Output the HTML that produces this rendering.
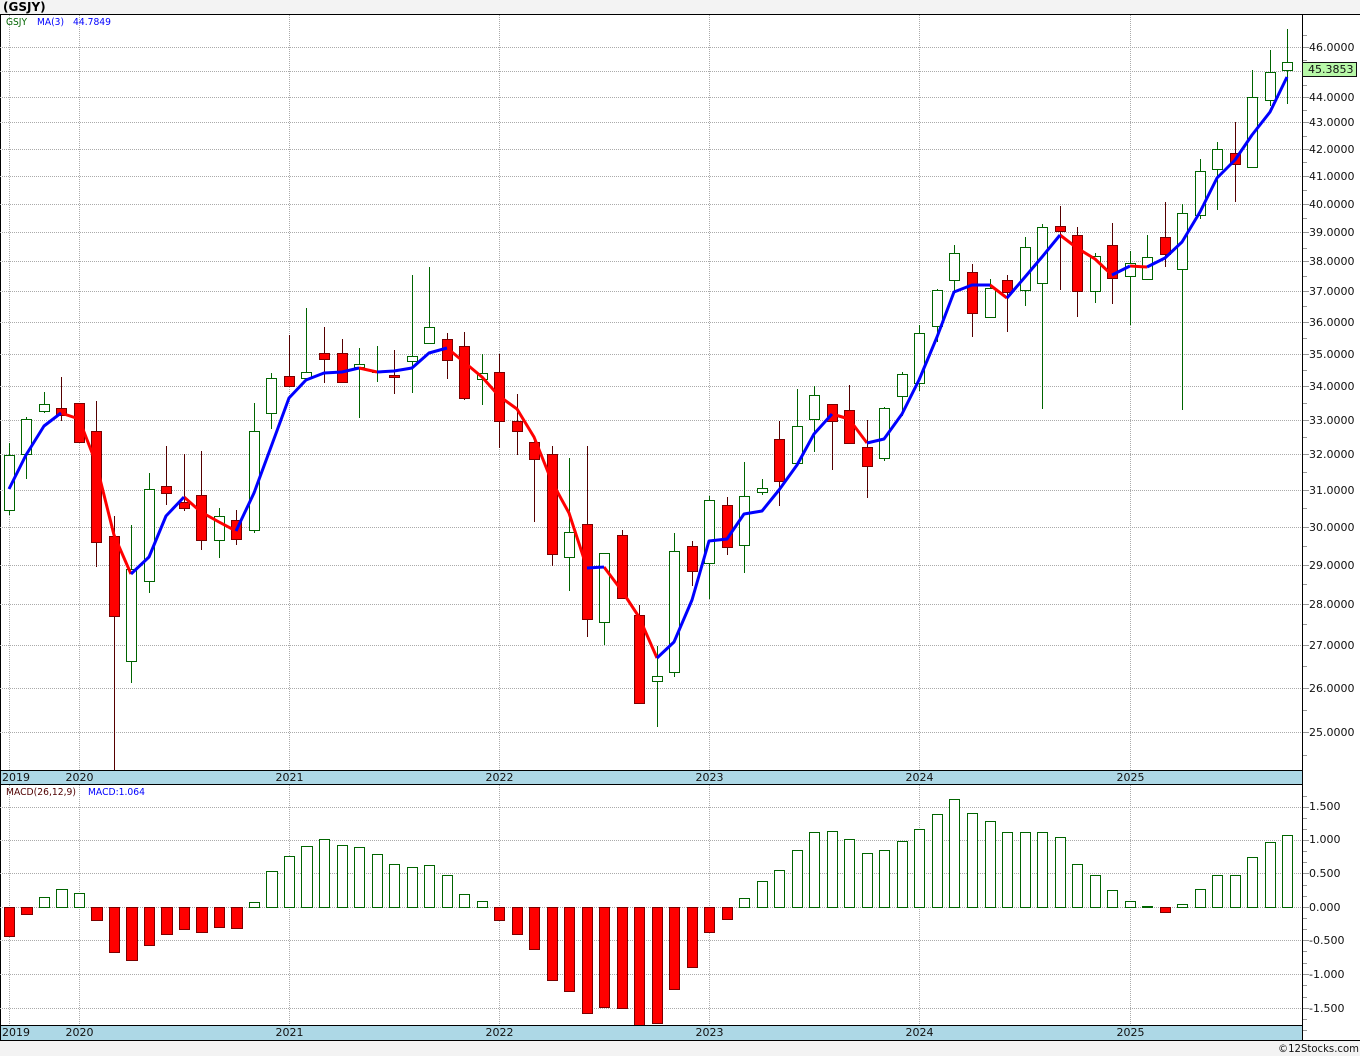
<!DOCTYPE html>
<html lang="en">
<head>
<meta charset="utf-8">
<title>(GSJY)</title>
<style>
html,body{margin:0;padding:0;background:#f3f3f3;width:1360px;height:1056px;overflow:hidden}
svg{display:block;position:absolute;left:0;top:0}
text{font-family:"DejaVu Sans","Liberation Sans",sans-serif;font-size:11px;fill:#111}
</style>
</head>
<body>
<svg width="1360" height="1056" viewBox="0 0 1360 1056" xmlns="http://www.w3.org/2000/svg">
<rect x="0" y="0" width="1360" height="1056" fill="#f3f3f3"/>
<rect x="0" y="14" width="1360" height="1026" fill="#fff"/>
<rect x="0" y="770" width="1302" height="14" fill="#add8e6"/>
<rect x="0" y="1025" width="1302" height="15" fill="#add8e6"/>
<path fill="none" stroke="#000" stroke-width="1" d="M0.5 14V1040"/>

<!-- grid -->
<g fill="none" stroke="#aaa" stroke-width="1" stroke-dasharray="1 1">
<path d="M0 47.5H1302M0 71.5H1302M0 97.5H1302M0 122.5H1302M0 149.5H1302M0 176.5H1302M0 204.5H1302M0 232.5H1302M0 261.5H1302M0 291.5H1302M0 322.5H1302M0 354.5H1302M0 386.5H1302M0 420.5H1302M0 454.5H1302M0 490.5H1302M0 527.5H1302M0 565.5H1302M0 604.5H1302M0 645.5H1302M0 688.5H1302M0 732.5H1302"/>
<path d="M0 807.5H1302M0 840.5H1302M0 873.5H1302M0 907.5H1302M0 940.5H1302M0 974.5H1302M0 1008.5H1302"/>
<path d="M9.5 15V770M79.5 15V770M289.5 15V770M499.5 15V770M709.5 15V770M919.5 15V770M1130.5 15V770"/>
<path d="M9.5 785V1025M79.5 785V1025M289.5 785V1025M499.5 785V1025M709.5 785V1025M919.5 785V1025M1130.5 785V1025"/>
</g>

<!-- wicks -->
<path fill="none" stroke="#006400" stroke-width="1" d="M9.5 443V515M26.5 417V479M44.5 392V413M131.5 525V683M149.5 473V593M219.5 508V558M254.5 403V533M271.5 373V429M306.5 308V381M359.5 348V418M377.5 346V382M412.5 275V393M429.5 267V344M482.5 354V405M569.5 458V591M604.5 553V645M657.5 646V727M674.5 533V677M709.5 496V599M744.5 462V573M762.5 479V495M797.5 389V464M814.5 386V452M884.5 407V461M902.5 372V416M919.5 325V391M937.5 289V342M954.5 245V293M990.5 279V318M1025.5 237V306M1042.5 224V409M1095.5 253V303M1130.5 251V325M1147.5 235V280M1182.5 204V410M1200.5 159V219M1217.5 142V210M1252.5 70V168M1270.5 50V106M1287.5 29V104"/>
<path fill="none" stroke="#550000" stroke-width="1" d="M61.5 377V421M79.5 403V443M96.5 401V567M114.5 516V770M166.5 446V505M184.5 454V511M201.5 451V550M236.5 510V545M289.5 335V387M324.5 327V383M342.5 339V383M394.5 350V394M447.5 333V379M464.5 332V400M499.5 354V448M517.5 394V455M534.5 437V522M552.5 446V566M587.5 446V637M622.5 530V599M639.5 605V704M692.5 541V586M727.5 497V555M779.5 421V506M832.5 404V470M849.5 385V444M867.5 420V498M972.5 264V337M1007.5 275V332M1060.5 206V290M1077.5 227V317M1112.5 223V304M1165.5 202V267M1235.5 122V202"/>

<!-- up bodies -->
<path fill="#fff" stroke="#006400" stroke-width="1" d="M4.5 455.5h10v55h-10zM21.5 419.5h10v35h-10zM39.5 404.5h10v7h-10zM126.5 569.5h10v92h-10zM144.5 489.5h10v92h-10zM214.5 516.5h10v24h-10zM249.5 431.5h10v99h-10zM266.5 378.5h10v35h-10zM301.5 372.5h10v6h-10zM354.5 364.5h10v3h-10zM372.5 371.5h10v1h-10zM407.5 356.5h10v5h-10zM424.5 327.5h10v16h-10zM477.5 373.5h10v6h-10zM564.5 532.5h10v25h-10zM599.5 553.5h10v69h-10zM652.5 676.5h10v5h-10zM669.5 551.5h10v121h-10zM704.5 500.5h10v63h-10zM739.5 496.5h10v49h-10zM757.5 488.5h10v4h-10zM792.5 426.5h10v37h-10zM809.5 395.5h10v24h-10zM879.5 408.5h10v50h-10zM897.5 374.5h10v22h-10zM914.5 333.5h10v50h-10zM932.5 290.5h10v36h-10zM949.5 253.5h10v27h-10zM985.5 288.5h10v29h-10zM1020.5 247.5h10v43h-10zM1037.5 227.5h10v56h-10zM1090.5 256.5h10v35h-10zM1125.5 263.5h10v13h-10zM1142.5 257.5h10v22h-10zM1177.5 213.5h10v56h-10zM1195.5 171.5h10v44h-10zM1212.5 149.5h10v20h-10zM1247.5 97.5h10v70h-10zM1265.5 72.5h10v28h-10zM1282.5 62.5h10v8h-10z"/>
<!-- down bodies -->
<path fill="#ff0000" stroke="#7a0000" stroke-width="1" d="M56.5 408.5h10v7h-10zM74.5 403.5h10v39h-10zM91.5 431.5h10v111h-10zM109.5 536.5h10v80h-10zM161.5 486.5h10v7h-10zM179.5 502.5h10v6h-10zM196.5 495.5h10v45h-10zM231.5 520.5h10v19h-10zM284.5 376.5h10v10h-10zM319.5 353.5h10v6h-10zM337.5 353.5h10v29h-10zM389.5 375.5h10v2h-10zM442.5 339.5h10v21h-10zM459.5 346.5h10v52h-10zM494.5 372.5h10v49h-10zM512.5 421.5h10v10h-10zM529.5 442.5h10v17h-10zM547.5 454.5h10v100h-10zM582.5 524.5h10v95h-10zM617.5 535.5h10v63h-10zM634.5 615.5h10v88h-10zM687.5 546.5h10v25h-10zM722.5 505.5h10v42h-10zM774.5 439.5h10v42h-10zM827.5 404.5h10v17h-10zM844.5 410.5h10v33h-10zM862.5 447.5h10v19h-10zM967.5 272.5h10v41h-10zM1002.5 280.5h10v12h-10zM1055.5 226.5h10v5h-10zM1072.5 235.5h10v56h-10zM1107.5 245.5h10v33h-10zM1160.5 237.5h10v17h-10zM1230.5 153.5h10v11h-10z"/>

<!-- MA(3) -->
<g fill="none" stroke-width="3" stroke-linejoin="round">
<path stroke="#ff0000" d="M61 413L79 419L96 463L114 535L131 574M184 497L201 512L219 522L236 531M359 368L377 372M447 348L464 362L482 377L499 396L517 409L534 437L552 482L569 513L587 568M604 567L622 591L639 617L657 658M832 414L849 419L867 443M990 285L1007 298M1060 235L1077 248L1095 259L1112 275M1130 266L1147 267"/>
<path stroke="#0000ff" d="M9 489L26 455L44 426L61 413M131 574L149 557L166 516L184 497M236 531L254 493L271 447L289 398L306 380L324 373L342 372L359 368M377 372L394 371L412 368L429 353L447 348M587 568L604 567M657 658L674 642L692 600L709 541L727 539L744 514L762 511L779 490L797 465L814 434L832 414M867 443L884 439L902 414L919 380L937 337L954 292L972 285L990 285M1007 298L1025 277L1042 257L1060 235M1112 275L1130 266M1147 267L1165 258L1182 242L1200 212L1217 178L1235 160L1252 135L1270 112L1287 77"/>
</g>

<!-- MACD bars -->
<path fill="#fff" stroke="#006400" stroke-width="1" d="M39.5 897.5h10V907.5h-10zM56.5 889.5h11V907.5h-11zM74.5 893.5h10V907.5h-10zM249.5 902.5h10V907.5h-10zM266.5 871.5h11V907.5h-11zM284.5 856.5h10V907.5h-10zM301.5 846.5h11V907.5h-11zM319.5 839.5h10V907.5h-10zM337.5 845.5h10V907.5h-10zM354.5 847.5h10V907.5h-10zM372.5 854.5h10V907.5h-10zM389.5 864.5h10V907.5h-10zM407.5 867.5h10V907.5h-10zM424.5 865.5h10V907.5h-10zM442.5 875.5h10V907.5h-10zM459.5 894.5h10V907.5h-10zM477.5 901.5h10V907.5h-10zM739.5 898.5h10V907.5h-10zM757.5 881.5h10V907.5h-10zM774.5 870.5h10V907.5h-10zM792.5 850.5h10V907.5h-10zM809.5 832.5h10V907.5h-10zM827.5 831.5h10V907.5h-10zM844.5 839.5h10V907.5h-10zM862.5 853.5h10V907.5h-10zM879.5 850.5h10V907.5h-10zM897.5 841.5h10V907.5h-10zM914.5 829.5h10V907.5h-10zM932.5 814.5h10V907.5h-10zM949.5 799.5h10V907.5h-10zM967.5 813.5h10V907.5h-10zM985.5 821.5h10V907.5h-10zM1002.5 832.5h10V907.5h-10zM1020.5 832.5h10V907.5h-10zM1037.5 832.5h10V907.5h-10zM1055.5 837.5h10V907.5h-10zM1072.5 864.5h10V907.5h-10zM1090.5 875.5h10V907.5h-10zM1107.5 890.5h10V907.5h-10zM1125.5 901.5h10V907.5h-10zM1142.5 906.5h10V907.5h-10zM1177.5 904.5h10V907.5h-10zM1195.5 889.5h10V907.5h-10zM1212.5 875.5h10V907.5h-10zM1230.5 875.5h10V907.5h-10zM1247.5 857.5h10V907.5h-10zM1265.5 842.5h10V907.5h-10zM1282.5 835.5h10V907.5h-10z"/>
<path fill="#ff0000" stroke="#7a0000" stroke-width="1" d="M4.5 907.5h10V936.5h-10zM21.5 907.5h11V914.5h-11zM91.5 907.5h11V920.5h-11zM109.5 907.5h10V952.5h-10zM126.5 907.5h11V960.5h-11zM144.5 907.5h10V945.5h-10zM161.5 907.5h11V934.5h-11zM179.5 907.5h10V929.5h-10zM196.5 907.5h11V932.5h-11zM214.5 907.5h10V927.5h-10zM231.5 907.5h11V928.5h-11zM494.5 907.5h10V920.5h-10zM512.5 907.5h10V934.5h-10zM529.5 907.5h10V949.5h-10zM547.5 907.5h10V980.5h-10zM564.5 907.5h10V991.5h-10zM582.5 907.5h10V1013.5h-10zM599.5 907.5h10V1007.5h-10zM617.5 907.5h10V1008.5h-10zM634.5 907.5h10V1026h-10zM652.5 907.5h10V1023.5h-10zM669.5 907.5h10V989.5h-10zM687.5 907.5h10V967.5h-10zM704.5 907.5h10V932.5h-10zM722.5 907.5h10V919.5h-10zM1160.5 907.5h10V912.5h-10z"/>

<!-- frame -->
<rect x="1" y="770" width="1301" height="14" fill="#add8e6"/>
<rect x="1" y="1026" width="1301" height="14" fill="#add8e6"/>
<path fill="none" stroke="#000" stroke-width="1" d="M0 14.5H1360M1302.5 14V1041M0 770.5H1302M0 784.5H1302M0 1025.5H1302M0 1040.5H1360"/>

<!-- ticks -->
<path fill="none" stroke="#999" stroke-width="1" d="M1303 47.5h6M1303 97.5h6M1303 122.5h6M1303 149.5h6M1303 176.5h6M1303 204.5h6M1303 232.5h6M1303 261.5h6M1303 291.5h6M1303 322.5h6M1303 354.5h6M1303 386.5h6M1303 420.5h6M1303 454.5h6M1303 490.5h6M1303 527.5h6M1303 565.5h6M1303 604.5h6M1303 645.5h6M1303 688.5h6M1303 732.5h6M1303 35.5h4M1303 60.5h4M1303 85.5h4M1303 110.5h4M1303 136.5h4M1303 162.5h4M1303 190.5h4M1303 218.5h4M1303 248.5h4M1303 276.5h4M1303 306.5h4M1303 338.5h4M1303 370.5h4M1303 403.5h4M1303 437.5h4M1303 472.5h4M1303 508.5h4M1303 546.5h4M1303 584.5h4M1303 624.5h4M1303 666.5h4M1303 710.5h4M1303 755.5h4"/>
<path fill="none" stroke="#999" stroke-width="1" d="M1303 807.5h6M1303 840.5h6M1303 873.5h6M1303 907.5h6M1303 940.5h6M1303 974.5h6M1303 1008.5h6M1303 796.5h4M1303 818.5h4M1303 829.5h4M1303 851.5h4M1303 862.5h4M1303 885.5h4M1303 896.5h4M1303 918.5h4M1303 929.5h4M1303 951.5h4M1303 963.5h4M1303 985.5h4M1303 997.5h4M1303 1019.5h4M1303 1030.5h4"/>

<!-- price axis labels -->
<text x="1309" y="51">46.0000</text>
<text x="1309" y="101">44.0000</text>
<text x="1309" y="126">43.0000</text>
<text x="1309" y="153">42.0000</text>
<text x="1309" y="180">41.0000</text>
<text x="1309" y="208">40.0000</text>
<text x="1309" y="236">39.0000</text>
<text x="1309" y="265">38.0000</text>
<text x="1309" y="295">37.0000</text>
<text x="1309" y="326">36.0000</text>
<text x="1309" y="358">35.0000</text>
<text x="1309" y="390">34.0000</text>
<text x="1309" y="424">33.0000</text>
<text x="1309" y="458">32.0000</text>
<text x="1309" y="494">31.0000</text>
<text x="1309" y="531">30.0000</text>
<text x="1309" y="569">29.0000</text>
<text x="1309" y="608">28.0000</text>
<text x="1309" y="649">27.0000</text>
<text x="1309" y="692">26.0000</text>
<text x="1309" y="736">25.0000</text>

<rect x="1302.5" y="62.5" width="54" height="14" fill="#b8f8a8" stroke="#111" stroke-width="1"/>
<text x="1308" y="73">45.3853</text>

<!-- MACD axis labels -->
<text x="1309" y="810">1.500</text>
<text x="1309" y="843">1.000</text>
<text x="1309" y="877">0.500</text>
<text x="1309" y="911">0.000</text>
<text x="1309" y="944">-0.500</text>
<text x="1309" y="978">-1.000</text>
<text x="1309" y="1012">-1.500</text>

<!-- time labels -->
<text x="2" y="781">2019</text>
<text x="65.5" y="781">2020</text>
<text x="275.5" y="781">2021</text>
<text x="485.5" y="781">2022</text>
<text x="695.5" y="781">2023</text>
<text x="905.5" y="781">2024</text>
<text x="1116.5" y="781">2025</text>
<text x="2" y="1036">2019</text>
<text x="65.5" y="1036">2020</text>
<text x="275.5" y="1036">2021</text>
<text x="485.5" y="1036">2022</text>
<text x="695.5" y="1036">2023</text>
<text x="905.5" y="1036">2024</text>
<text x="1116.5" y="1036">2025</text>

<!-- legends -->
<text x="6" y="25" style="font-size:10px;fill:#006400" textLength="21" lengthAdjust="spacingAndGlyphs">GSJY</text>
<text x="37" y="25" style="font-size:10px;fill:#0000ff" textLength="27" lengthAdjust="spacingAndGlyphs">MA(3)</text>
<text x="73" y="25" style="font-size:10px;fill:#0000ff" textLength="38" lengthAdjust="spacingAndGlyphs">44.7849</text>
<text x="6" y="795" style="font-size:10px;fill:#500000" textLength="70" lengthAdjust="spacingAndGlyphs">MACD(26,12,9)</text>
<text x="88" y="795" style="font-size:10px;fill:#0000ff" textLength="57" lengthAdjust="spacingAndGlyphs">MACD:1.064</text>

<!-- title, copyright -->
<text x="3" y="11" style="font-size:12px;font-weight:bold;fill:#000">(GSJY)</text>
<text x="1278" y="1052" textLength="81" lengthAdjust="spacingAndGlyphs">©12Stocks.com</text>
</svg>
</body>
</html>
